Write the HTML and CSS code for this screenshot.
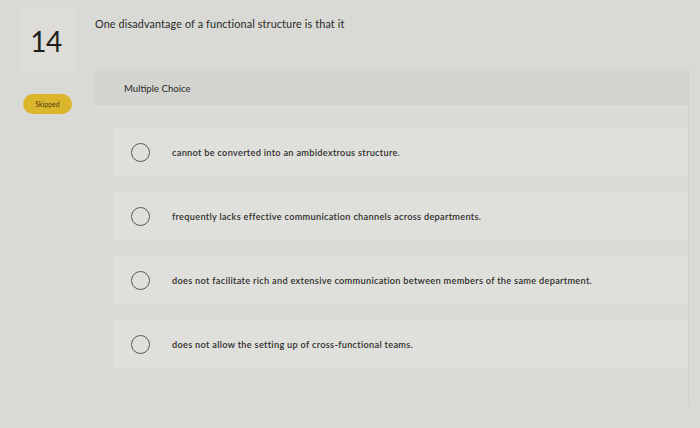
FILE: index.html
```html
<!DOCTYPE html>
<html lang="en">
<head>
<meta charset="utf-8">
<title>Question 14</title>
<link rel="stylesheet" href="styles.css">
</head>
<body>
<div class="page">
  <aside class="side">
    <div class="qnum">14</div>
    <span class="badge">Skipped</span>
  </aside>
  <main class="content">
    <p class="prompt">One disadvantage of a functional structure is that it</p>
    <section class="panel">
      <div class="panel-head">Multiple Choice</div>
      <ul class="options">
        <li class="option"><span class="radio"></span><span class="label">cannot be converted into an ambidextrous structure.</span></li>
        <li class="option"><span class="radio"></span><span class="label">frequently lacks effective communication channels across departments.</span></li>
        <li class="option"><span class="radio"></span><span class="label">does not facilitate rich and extensive communication between members of the same department.</span></li>
        <li class="option"><span class="radio"></span><span class="label">does not allow the setting up of cross-functional teams.</span></li>
      </ul>
    </section>
  </main>
</div>
</body>
</html>
```

FILE: styles.css
```css
html, body {
  margin: 0;
  padding: 0;
}
body {
  width: 700px;
  height: 428px;
  overflow: hidden;
  background: #d9d9d5;
  font-family: Lato, "Open Sans", "Liberation Sans", sans-serif;
  color: #2e2e2e;
}
.page {
  display: flex;
  gap: 21px;
  padding-left: 18px;
}
.side {
  width: 56px;
  display: flex;
  flex-direction: column;
  align-items: flex-start;
  padding-top: 8px;
}
.qnum {
  width: 56px;
  height: 65px;
  background: #dddcd8;
  display: flex;
  align-items: center;
  justify-content: center;
  font-size: 28px;
  font-weight: 400;
  color: #1e1e1e;
  letter-spacing: -0.5px;
}
.badge {
  margin-top: 21px;
  margin-left: 5px;
  width: 49px;
  height: 20px;
  border-radius: 10px;
  background: #dbb52b;
  color: #4a3c14;
  font-size: 7px;
  display: flex;
  align-items: center;
  justify-content: center;
}
.content {
  width: 593px;
  display: flex;
  flex-direction: column;
}
.prompt {
  margin: 17px 0 0;
  font-size: 10.8px;
  line-height: 14px;
  letter-spacing: 0.13px;
  color: #2a2a2a;
}
.panel {
  margin-top: 40px;
  height: 334px;
  background: #dadad6;
  box-shadow: 1px 0 0 #cfcfcb;
}
.panel-head {
  height: 34px;
  background: #d3d3d0;
  padding-left: 29px;
  display: flex;
  align-items: center;
  font-size: 9.6px;
  color: #2a2a2a;
}
.options {
  list-style: none;
  margin: 0;
  padding: 23px 0 0 18px;
  display: flex;
  flex-direction: column;
  gap: 16px;
}
.option {
  height: 48px;
  background: #dfdfdb;
  display: flex;
  align-items: center;
  padding-left: 18px;
  gap: 22px;
  font-size: 9.2px;
  letter-spacing: 0.3px;
  color: #2e2e2e;
  font-weight: 600;
}
.radio {
  width: 17px;
  height: 17px;
  border: 1.4px solid #5a5a5a;
  border-radius: 50%;
  flex: none;
}
```
